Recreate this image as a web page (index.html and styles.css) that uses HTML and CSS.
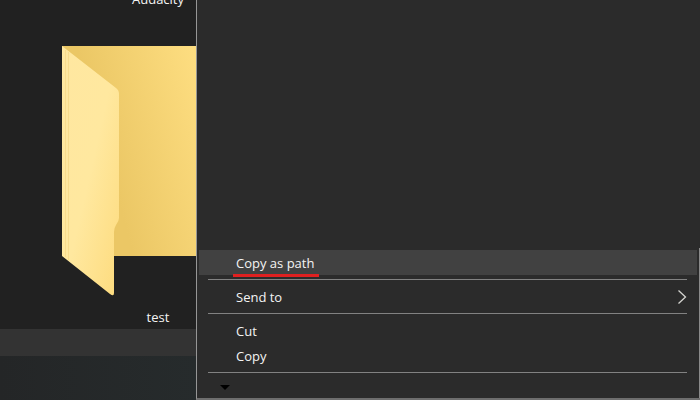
FILE: index.html
```html
<!DOCTYPE html>
<html lang="en">
<head>
    <meta charset="UTF-8">
    <title>Copy as path</title>
    <link rel="stylesheet" href="styles.css">
</head>
<body>
    <div class="screen">
        <!-- Explorer window -->
        <div class="explorer">
            <div class="files">
                <div class="file-name">Audacity</div>
                <div class="file">
                    <svg class="folder" width="192" height="250" viewBox="0 0 192 250" aria-hidden="true">
                        <defs>
                            <linearGradient id="back" x1="0" y1="0.3" x2="1" y2="0">
                                <stop offset="0.15" stop-color="#ebc765"/>
                                <stop offset="0.7" stop-color="#fddd80"/>
                            </linearGradient>
                            <linearGradient id="front" x1="0" y1="0" x2="1" y2="1">
                                <stop offset="0" stop-color="#ffe7a0"/>
                                <stop offset="0.5" stop-color="#ffe89f"/>
                                <stop offset="1" stop-color="#fddb7d"/>
                            </linearGradient>
                        </defs>
                        <rect x="0" y="0" width="192" height="210" fill="url(#back)"/>
                        <path d="M0 0 L54 42 Q57 44 57 48 V172 Q57 175 54 179 Q52 182 52 186 V247 Q52 251 48 248 L0 210 Z" fill="url(#front)"/>
                        <path d="M3.5 4 V211 M6.5 6 V214" stroke="#f8dc8c" fill="none"/>
                    </svg>
                    <div class="file-name">test</div>
                </div>
            </div>
            <div class="status-bar"></div>
            <div class="wallpaper"></div>
        </div>

        <!-- Context menu -->
        <div class="menu">
            <div class="menu-items">
                <button class="menu-item active"><span class="marked">Copy as path</span></button>
                <hr>
                <button class="menu-item">
                    <span>Send to</span>
                    <svg class="chevron" width="10" height="16" viewBox="0 0 10 16" aria-hidden="true">
                        <path d="M1.5 1.5 L8.5 8 L1.5 14.5" fill="none" stroke="#d4d4d0" stroke-width="1.3"/>
                    </svg>
                </button>
                <hr>
                <button class="menu-item">Cut</button>
                <button class="menu-item">Copy</button>
                <hr>
                <button class="scroll-down" aria-label="Scroll down">
                    <svg width="10" height="5" viewBox="0 0 10 5" aria-hidden="true">
                        <path d="M0 0 H10 L5 5 Z" fill="#000"/>
                    </svg>
                </button>
            </div>
        </div>
    </div>
</body>
</html>
```
FILE: styles.css
```css
body {
    margin: 0;
    background-color: #212121;
    color: #f4f4f4;
    font-family: "Open Sans", "Noto Sans", sans-serif;
    font-size: 13px;
    font-weight: 500;
    line-height: 18px;
}
.screen {
    display: grid;
    grid-template-columns: 28% 1fr;
    height: 100vh;
    overflow: hidden;
}

/* Explorer */
.explorer {
    display: flex;
    flex-direction: column;
    min-width: 0;
    overflow: hidden;
}
.files {
    flex: 1;
    display: flex;
    flex-direction: column;
    justify-content: flex-end;
    min-height: 0;
    padding: 0 0 3px 62px;
}
.file-name {
    width: 192px;
    text-align: center;
}
.file {
    margin-top: 38px;
}
.folder {
    display: block;
    margin-bottom: 12px;
}
.status-bar {
    height: 27px;
    background-color: #333333;
}
.wallpaper {
    height: 44px;
    background: linear-gradient(to right, #242627, #262b2c);
}

/* Context menu */
.menu {
    display: flex;
    flex-direction: column;
    justify-content: flex-end;
    background-color: #2b2b2b;
    border-left: 1px solid #969696;
    border-bottom: 2px solid #6e6e6e;
}
.menu-items {
    padding: 2px 2px 0;
    border-right: 1px solid #8a8a8a;
}
.menu-item, .scroll-down {
    display: flex;
    align-items: center;
    width: 100%;
    border: none;
    background: none;
    color: inherit;
    font: inherit;
    text-align: left;
}
.menu-item {
    justify-content: space-between;
    height: 25px;
    padding: 0 10px 0 37px;
}
.menu-item.active, .menu-item:hover {
    background-color: #414141;
}
.marked {
    height: 20px;
    margin: 5px 0 0 -3px;
    padding: 0 5px 0 3px;
    border-bottom: 3px solid #e02020;
}
hr {
    height: 1px;
    margin: 4px 10px 4px 9px;
    border: none;
    background-color: #828282;
}
.scroll-down {
    height: 21px;
    padding: 0 21px;
}
```
